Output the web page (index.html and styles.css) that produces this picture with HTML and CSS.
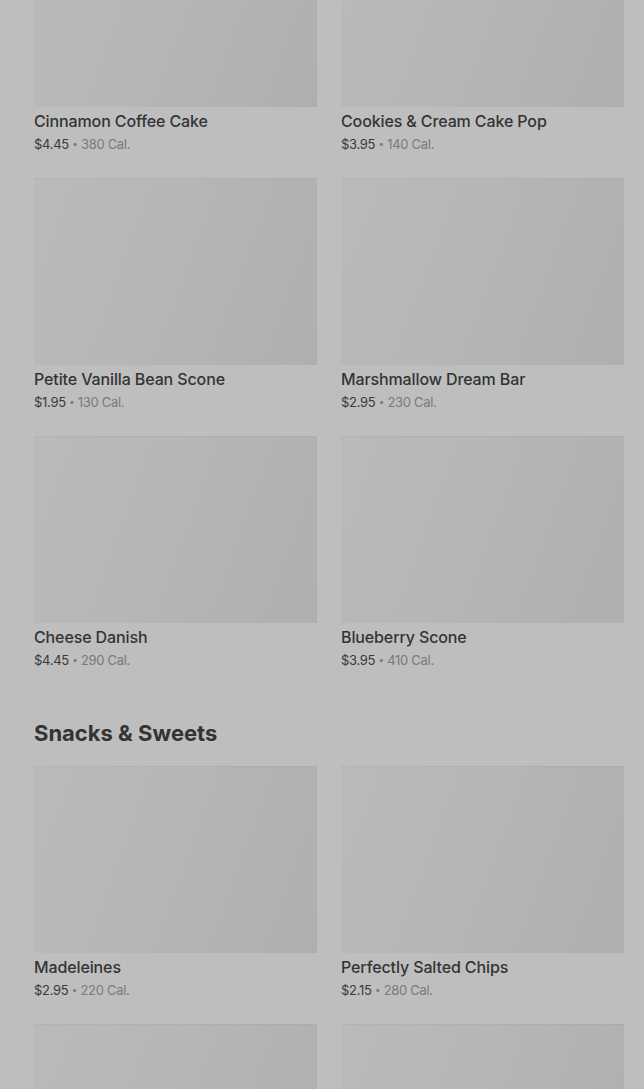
FILE: index.html
```html
<!DOCTYPE html>
<html lang="en">
<head>
<meta charset="utf-8">
<title>Menu</title>
<link rel="stylesheet" href="styles.css">
</head>
<body>
<main class="menu">
  <section class="grid first">
    <article class="item"><div class="thumb"></div><h3 class="name">Cinnamon Coffee Cake</h3><p class="meta"><span class="price">$4.45</span> <span class="dot">•</span> 380 Cal.</p></article>
    <article class="item"><div class="thumb"></div><h3 class="name">Cookies &amp; Cream Cake Pop</h3><p class="meta"><span class="price">$3.95</span> <span class="dot">•</span> 140 Cal.</p></article>
    <article class="item"><div class="thumb"></div><h3 class="name">Petite Vanilla Bean Scone</h3><p class="meta"><span class="price">$1.95</span> <span class="dot">•</span> 130 Cal.</p></article>
    <article class="item"><div class="thumb"></div><h3 class="name">Marshmallow Dream Bar</h3><p class="meta"><span class="price">$2.95</span> <span class="dot">•</span> 230 Cal.</p></article>
    <article class="item"><div class="thumb"></div><h3 class="name">Cheese Danish</h3><p class="meta"><span class="price">$4.45</span> <span class="dot">•</span> 290 Cal.</p></article>
    <article class="item"><div class="thumb"></div><h3 class="name">Blueberry Scone</h3><p class="meta"><span class="price">$3.95</span> <span class="dot">•</span> 410 Cal.</p></article>
  </section>
  <h2 class="section-title">Snacks &amp; Sweets</h2>
  <section class="grid">
    <article class="item"><div class="thumb"></div><h3 class="name">Madeleines</h3><p class="meta"><span class="price">$2.95</span> <span class="dot">•</span> 220 Cal.</p></article>
    <article class="item"><div class="thumb"></div><h3 class="name">Perfectly Salted Chips</h3><p class="meta"><span class="price">$2.15</span> <span class="dot">•</span> 280 Cal.</p></article>
    <article class="item"><div class="thumb"></div><h3 class="name">&nbsp;</h3><p class="meta">&nbsp;</p></article>
    <article class="item"><div class="thumb"></div><h3 class="name">&nbsp;</h3><p class="meta">&nbsp;</p></article>
  </section>
</main>
</body>
</html>
```
FILE: styles.css
```css
html, body {
  margin: 0;
  padding: 0;
  background: #bebebe;
  overflow: hidden;
}
body {
  font-family: Inter, "Noto Sans", "Liberation Sans", sans-serif;
  color: #333;
}
.menu {
  padding: 0 20px 0 34px;
}
.grid {
  display: grid;
  grid-template-columns: 1fr 1fr;
  column-gap: 24px;
  row-gap: 24px;
}
.grid.first {
  margin-top: -80px;
}
.item {
  margin: 0;
}
.thumb {
  height: 187px;
  background: linear-gradient(110deg, #bababa 0%, #b6b6b6 45%, #afafaf 100%);
  box-shadow: inset 0 1px 0 rgba(0,0,0,0.03);
}
.name {
  margin: 3px 0 0;
  font-size: 16px;
  line-height: 22px;
  font-weight: 500;
  color: #343434;
  letter-spacing: -0.12px;
}
.meta {
  margin: 2px 0 0;
  height: 20px;
  font-size: 13px;
  line-height: 20px;
  color: #7a7a7a;
  letter-spacing: -0.3px;
}
.price {
  color: #3a3a3a;
}
.dot {
  font-size: 10px;
  line-height: 0;
  vertical-align: 2px;
}
.section-title {
  margin: 48px 0 18px;
  font-size: 22px;
  line-height: 30px;
  font-weight: 700;
  color: #333;
  letter-spacing: 0;
}
```
